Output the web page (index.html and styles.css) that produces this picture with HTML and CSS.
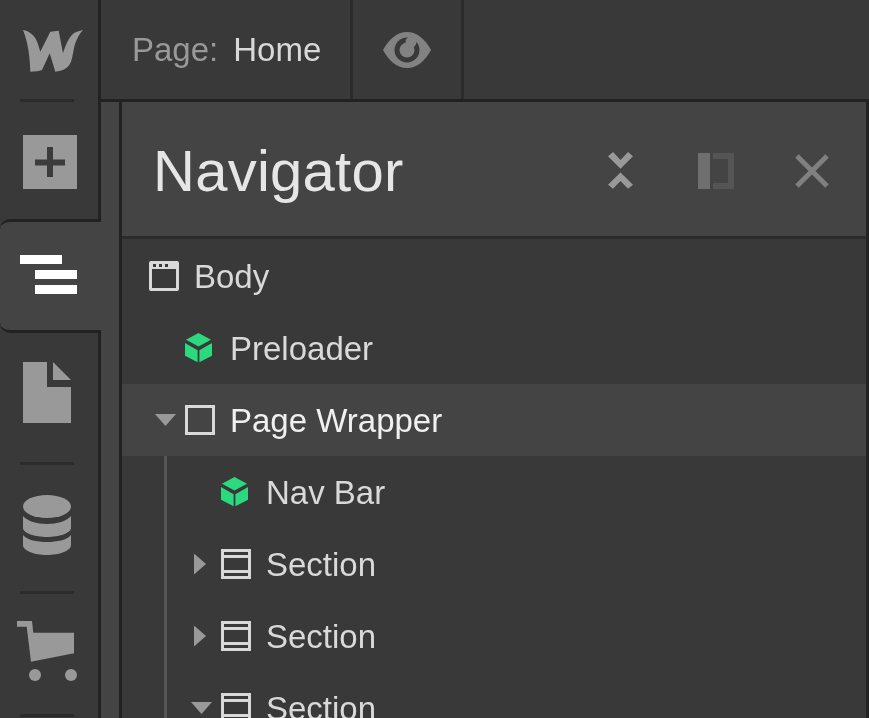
FILE: index.html
```html
<!DOCTYPE html>
<html lang="en">
<head>
  <meta charset="UTF-8">
  <title>Navigator</title>
  <link rel="stylesheet" href="styles.css">
</head>
<body>
  <div class="app">
    <div class="sidebar">
      <div class="side-item logo-item">
        <svg width="60" height="42" viewBox="0 0 60 42"><path fill="#999" d="M0 0C6 1 12 5 14.7 13.3L17.3 21.7L27.3 1.7L35.7 .7L40 23.3C42 17 45 8 50.7 3.3C53 2 56 .7 60 0C56 4 54 9 52.3 13.3C50 20 50 28 47.3 33.3C45 38 40 41 32.3 41.7L26.7 23.3L19 40C16 41 12 41.7 7.3 41.7C7 28 5 12 0 0Z"/></svg>
      </div>
      <div class="divider"></div>
      <div class="side-item add-item">
        <div class="add-box"><svg width="54" height="54" viewBox="0 0 54 54"><path fill="#3c3c3c" d="M12 24.5h12V12h6v12.500h12v6H30V42h-6V30.500H12z"/></svg></div>
      </div>
      <div class="side-item nav-item">
        <svg width="58" height="39" viewBox="0 0 58 39"><path fill="#fff" d="M0 0h42v9H0zM15 15h42v9H15zM15 30h42v9H15z"/></svg>
      </div>
      <div class="side-item page-item">
        <svg width="48" height="62" viewBox="0 0 48 62"><path fill="#999" d="M0 0h24v25h24v36H0zM30 0l18 18H30z"/></svg>
      </div>
      <div class="divider"></div>
      <div class="side-item db-item">
        <svg width="48" height="60" viewBox="0 0 48 60">
          <ellipse fill="#999" cx="24" cy="11.500" rx="24" ry="11.500"/>
          <path fill="#999" d="M0 21C4 26 14 29 24 29S44 26 48 21V33C48 38 36 42 24 42S0 38 0 33Z"/>
          <path fill="#999" d="M0 40C4 45 14 47 24 47S44 45 48 40V50C48 56 36 60 24 60S0 56 0 50Z"/>
        </svg>
      </div>
      <div class="divider"></div>
      <div class="side-item cart-item">
        <svg width="60" height="60" viewBox="0 0 60 60">
          <path fill="#999" d="M0 0H15L16.300 11.700H57V32.300L14 40.700L9.700 5.700H0Z"/>
          <circle fill="#999" cx="18" cy="54" r="6"/>
          <circle fill="#999" cx="54" cy="54" r="6"/>
        </svg>
      </div>
      <div class="divider"></div>
    </div>

    <div class="main">
      <div class="topbar">
        <div class="page-name"><span class="page-label">Page:</span><span class="page-value">Home</span></div>
        <div class="preview">
          <svg width="48" height="36" viewBox="0 0 48 36">
            <path fill="#828282" d="M0 18C6 7 14 0 24 0s18 7 24 18c-6 11-14 18-24 18S6 29 0 18z"/>
            <circle fill="#393939" cx="24" cy="18" r="12.500"/>
            <circle fill="#828282" cx="24" cy="18" r="7.500"/>
            <circle fill="#828282" cx="28" cy="10" r="5.500"/>
          </svg>
        </div>
      </div>
      <div class="panel-wrap">
        <div class="panel">
          <div class="panel-head">
            <h1>Navigator</h1>
            <div class="head-icons">
              <svg class="collapse-icon" width="25" height="37" viewBox="0 0 25 37"><path fill="#999" d="M0 4.300L5 0L12.500 8L20 0L25 4.300L12.500 16.700ZM12.500 20.400L25 32.700L20 36.700L12.500 29L5 36.700L0 32.700Z"/></svg>
              <svg width="36" height="36" viewBox="0 0 36 36"><path fill="#6f6f6f" d="M0 0h12v36H0z"/><path fill="none" stroke="#555" stroke-width="6" d="M15 3h18v30H15"/></svg>
              <svg width="34" height="34" viewBox="0 0 34 34"><path fill="none" stroke="#808080" stroke-width="5" d="M2 2l30 30M32 2L2 32"/></svg>
            </div>
          </div>
          <div class="tree">
            <div class="row depth-0">
              <svg class="node" width="30" height="30" viewBox="0 0 30 30"><path fill="#d9d9d9" fill-rule="evenodd" d="M2 0h26a2 2 0 0 1 2 2v26a2 2 0 0 1-2 2H2a2 2 0 0 1-2-2V2a2 2 0 0 1 2-2zM3 8v19h24V8zM4 3v3h3V3zM10 3v3h3V3zM16 3v3h3V3z"/></svg>
              <span class="row-label">Body</span>
            </div>
            <div class="row depth-1">
              <svg class="node" width="30" height="30" viewBox="0 0 30 30"><path fill="#2bd97f" d="M13.500 0L26 6.700L13.500 13.500L1 6.700ZM0 10L12.600 17.300V29.300L0 22.700ZM27 10V22.700L14.400 29.300V17.300Z"/></svg>
              <span class="row-label">Preloader</span>
            </div>
            <div class="row depth-1 selected">
              <span class="caret caret-down"></span>
              <svg class="node" width="30" height="30" viewBox="0 0 30 30"><rect fill="none" stroke="#d9d9d9" stroke-width="3" x="1.500" y="1.500" width="27" height="27"/></svg>
              <span class="row-label">Page Wrapper</span>
            </div>
            <div class="children">
              <div class="row depth-2">
                <svg class="node" width="30" height="30" viewBox="0 0 30 30"><path fill="#2bd97f" d="M13.500 0L26 6.700L13.500 13.500L1 6.700ZM0 10L12.600 17.300V29.300L0 22.700ZM27 10V22.700L14.400 29.300V17.300Z"/></svg>
                <span class="row-label">Nav Bar</span>
              </div>
              <div class="row depth-2">
                <span class="caret caret-right"></span>
                <svg class="node" width="30" height="30" viewBox="0 0 30 30"><path fill="#d9d9d9" fill-rule="evenodd" d="M0 0h30v30H0zM3 3v3h24V3zM3 9v12h24V9zM3 24v3h24v-3z"/></svg>
                <span class="row-label">Section</span>
              </div>
              <div class="row depth-2">
                <span class="caret caret-right"></span>
                <svg class="node" width="30" height="30" viewBox="0 0 30 30"><path fill="#d9d9d9" fill-rule="evenodd" d="M0 0h30v30H0zM3 3v3h24V3zM3 9v12h24V9zM3 24v3h24v-3z"/></svg>
                <span class="row-label">Section</span>
              </div>
              <div class="row depth-2">
                <span class="caret caret-down"></span>
                <svg class="node" width="30" height="30" viewBox="0 0 30 30"><path fill="#d9d9d9" fill-rule="evenodd" d="M0 0h30v30H0zM3 3v3h24V3zM3 9v12h24V9zM3 24v3h24v-3z"/></svg>
                <span class="row-label">Section</span>
              </div>
            </div>
          </div>
        </div>
      </div>
    </div>
  </div>
</body>
</html>
```

FILE: styles.css
```css
body {
  margin: 0;
  height: 718px;
  overflow: hidden;
  background-color: #393939;
  font-family: "Liberation Sans", Arial, sans-serif;
}

.app {
  display: flex;
  height: 718px;
  overflow: hidden;
  will-change: transform; /* grey text edges, no colour fringe */
}

/* left icon strip */
.sidebar {
  width: 98px;
  flex-shrink: 0;
  border-right: 3px solid #222;
  display: flex;
  flex-direction: column;
  align-items: flex-start;
}

.side-item {
  display: flex;
  flex-shrink: 0;
  width: 98px;
  box-sizing: border-box;
  padding-left: 23px;
  align-items: center;
}

.logo-item {
  height: 99px;
  padding-top: 3px;
}

.divider {
  width: 54px;
  height: 3px;
  margin-left: 20px;
  flex-shrink: 0;
  background-color: #2b2b2b;
}

.add-item {
  height: 117px;
  padding-top: 3px;
}

.add-box {
  width: 54px;
  height: 54px;
  background-color: #999;
}

.add-box svg {
  display: block;
}

.nav-item {
  width: 119px;
  height: 114px;
  margin-right: -21px;
  padding-left: 20px;
  padding-bottom: 3px;
  background-color: #444;
  border-top: 3px solid #222;
  border-bottom: 3px solid #222;
  border-top-left-radius: 10px;
  border-bottom-left-radius: 10px;
  position: relative;
  z-index: 1;
}

/* the tab runs into the lighter strip without a line */
.nav-item::after {
  content: "";
  position: absolute;
  left: 101px;
  right: 0;
  top: -3px;
  bottom: -3px;
  background-color: #444;
}

.page-item {
  height: 129px;
  padding-top: 29px;
  align-items: flex-start;
}

.db-item {
  height: 126px;
  padding-bottom: 6px;
}

.db-item svg {
  filter: blur(0.6px);
}

.cart-item {
  height: 120px;
  padding-left: 17px;
  padding-top: 27px;
  align-items: flex-start;
}

/* top bar */
.main {
  flex: 1;
  min-width: 0;
  display: flex;
  flex-direction: column;
}

.topbar {
  height: 99px;
  flex-shrink: 0;
  display: flex;
  border-bottom: 3px solid #222;
}

.page-name {
  width: 252px;
  box-sizing: border-box;
  padding-left: 31px;
  display: flex;
  align-items: center;
  gap: 15px;
  font-size: 33px;
  border-right: 3px solid #2b2b2b;
}

.page-label {
  color: #999;
}

.page-value {
  color: #d9d9d9;
}

.preview {
  width: 108px;
  display: flex;
  align-items: center;
  justify-content: center;
  border-right: 3px solid #2b2b2b;
}

/* navigator panel */
.panel-wrap {
  flex: 1;
  min-height: 0;
  padding-left: 18px;
  background-color: #444;
}

.panel {
  height: 100%;
  background-color: #393939;
  border-left: 3px solid #222;
  border-right: 3px solid #222;
}

.panel-head {
  height: 131px;
  display: flex;
  align-items: center;
  justify-content: space-between;
  padding: 3px 37px 0 31px;
  background-color: #444;
  border-bottom: 3px solid #2b2b2b;
}

h1 {
  margin: 0;
  font-size: 58px;
  font-weight: normal;
  letter-spacing: 0.25px;
  color: #e6e6e6;
}

.head-icons {
  display: flex;
  align-items: center;
  gap: 61px;
}

.head-icons svg {
  display: block;
}

.collapse-icon {
  margin-right: 4px;
}

.tree {
  padding-top: 1px;
}

.row {
  height: 72px;
  display: flex;
  align-items: center;
  box-sizing: border-box;
  font-size: 33px;
  color: #d9d9d9;
}

.depth-0 {
  padding-left: 27px;
}

.depth-1 {
  padding-left: 63px;
}

.selected {
  background-color: #444;
  color: #f0f0f0;
}

.children {
  border-left: 3px solid #555;
  margin-left: 42px;
}

.depth-2 {
  padding-left: 54px;
}

.caret {
  background-color: #999;
}

.caret-down {
  width: 21px;
  height: 12px;
  margin-left: -30px;
  margin-right: 9px;
  clip-path: polygon(0 0, 100% 0, 50% 100%);
}

.caret-right {
  width: 12px;
  height: 21px;
  margin-left: -27px;
  margin-right: 15px;
  clip-path: polygon(0 0, 100% 50%, 0 100%);
}

.node {
  flex-shrink: 0;
}

.row-label {
  margin-left: 15px;
  padding-top: 2px;
}
```
